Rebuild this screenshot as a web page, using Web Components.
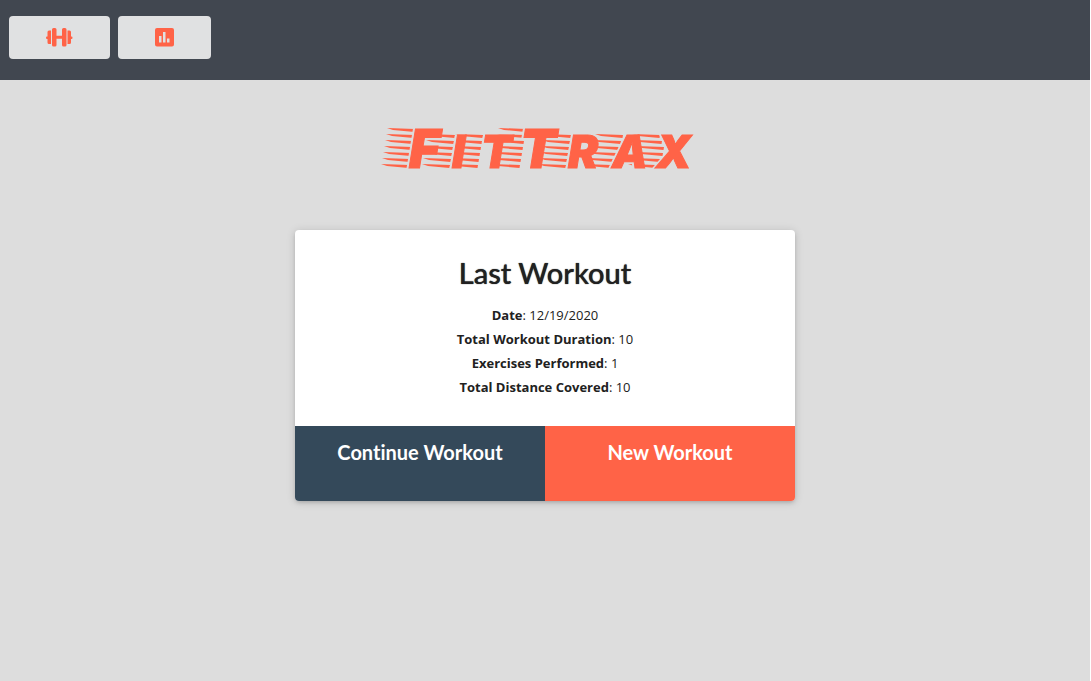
<!DOCTYPE html>
<html lang="en">
<head>
<meta charset="utf-8">
<meta name="viewport" content="width=device-width, initial-scale=1">
<title>FitTrax</title>
<style>
  html { background: #fff; }
  body { margin: 0; font-family: "Open Sans", "Noto Sans", sans-serif; color: #212121; }
</style>
</head>
<body>
<fit-app>
  <fit-nav slot="nav">
    <fit-nav-link href="#exercise" label="Workouts">
      <svg width="29" height="20" viewBox="0 0 29 20" fill="currentColor" aria-hidden="true">
        <path d="M2 8.500H2.500V4Q2.500 2.500 4 2.500H6V16H4Q2.500 16 2.500 14.500V11H2Q1 11 1 9.800Q1 8.500 2 8.500ZM8.500 0H10Q11.500 0 11.500 1.500V7.800H17V1.500Q17 0 18.500 0H20Q21.500 0 21.500 1.500V17Q21.500 18.500 20 18.500H18.500Q17 18.500 17 17V10.800H11.500V17Q11.500 18.500 10 18.500H8.500Q7 18.500 7 17V1.500Q7 0 8.500 0ZM22.500 2.500H24.500Q26 2.500 26 4V8.500H26.500Q27.500 8.500 27.500 9.800Q27.500 11 26.500 11H26V14.500Q26 16 24.500 16H22.500Z"/>
      </svg>
    </fit-nav-link>
    <fit-nav-link href="#stats" label="Statistics" compact>
      <svg width="21" height="20" viewBox="0 0 21 20" fill="currentColor" aria-hidden="true">
        <path fill-rule="evenodd" d="M3 0H18Q20 0 20 2V16.500Q20 18.500 18 18.500H3Q1 18.500 1 16.500V2Q1 0 3 0ZM5 8V14.500H7.500V8ZM9 4V14.500H11.500V4ZM13 10.500V14.500H15.500V10.500Z"/>
      </svg>
    </fit-nav-link>
  </fit-nav>
  <fit-logo></fit-logo>
  <workout-card heading="Last Workout">
    <workout-stat label="Date">12/19/2020</workout-stat>
    <workout-stat label="Total Workout Duration">10</workout-stat>
    <workout-stat label="Exercises Performed">1</workout-stat>
    <workout-stat label="Total Distance Covered">10</workout-stat>
    <workout-action slot="actions">Continue Workout</workout-action>
    <workout-action slot="actions" primary>New Workout</workout-action>
  </workout-card>
</fit-app>

<script>
class FitElement extends HTMLElement {
  constructor() {
    super();
    this.attachShadow({ mode: "open" }).innerHTML = this.view();
  }
}

customElements.define("fit-app", class extends FitElement {
  view() {
    return `<style>
      :host { display: flex; flex-direction: column; min-height: 100vh; margin-right: 1px; background: #ddd; }
      main { display: flex; flex-direction: column; align-items: center; gap: 56px; padding: 44px 16px; }
    </style>
    <slot name="nav"></slot>
    <main><slot></slot></main>`;
  }
});

customElements.define("fit-nav", class extends FitElement {
  view() {
    return `<style>
      :host { display: block; background: #414750; }
      nav { display: flex; gap: 8px; box-sizing: border-box; min-height: 80px; align-items: flex-start; padding: 16px 9px; }
    </style>
    <nav><slot></slot></nav>`;
  }
});

customElements.define("fit-nav-link", class extends FitElement {
  view() {
    return `<style>
      :host { display: block; color: #ff6347; }
      a { display: flex; box-sizing: border-box; height: 43px; align-items: center; justify-content: center; padding: 0 36px; border-radius: 4px; background: #e0e1e2; color: inherit; }
      ::slotted(svg) { display: block; }
    </style>
    <a href="${this.getAttribute("href")}" aria-label="${this.getAttribute("label")}"><slot></slot></a>`;
  }
});

/* Wordmark: heavy italic capitals with a fan of tapered speed lines behind each. */
customElements.define("fit-logo", class extends FitElement {
  view() {
    const rows = [12, 18, 24, 30, 36, 42, 48];
    const slant = [0, -1, -2, -3, -4, -5, -6];
    const fans = [
      { ends: slant.map(d => 40 + d), from: 0 },
      { ends: slant.map(d => 81 + d), from: 1 },
      { ends: slant.map(d => 109 + d), from: 1 },
      { ends: slant.map(d => 151 + d), from: 0 },
      { ends: slant.map(d => 197 + d), from: 1 },
      { ends: [0, 248, 246, 244, 242, 239, 236], from: 1 },
      { ends: [0, 285, 287, 289, 288, 285, 281], from: 1 }
    ];
    const line = (x, y) => `M${x - 28} ${y}L${x} ${y + 1}L${x - 0.5} ${y + 4}L${x - 22} ${y + 2}Z`;
    const d = fans.map(f => f.ends.map((x, i) => i < f.from ? "" : line(x, rows[i])).join("")).join("");
    return `<style>
      :host { display: block; color: #ff6347; }
      h1 { margin: 0; }
      svg { display: block; max-width: 100%; overflow: visible; }
      text { font: italic 900 53px Inter, "Open Sans", sans-serif; fill: currentColor; stroke: currentColor; stroke-width: 1px; filter: drop-shadow(-2px 0 0 #ddd); }
      .small { font-size: 45px; text-transform: uppercase; }
    </style>
    <h1><svg width="340" height="50" viewBox="0 8 340 50" role="img" aria-label="FitTrax">
      <path fill="currentColor" d="${d}"/>
      <text y="52"><tspan x="34">F</tspan><tspan class="small" x="77 106">it</tspan><tspan x="145">T</tspan><tspan class="small" x="193 237 281">rax</tspan></text>
    </svg></h1>`;
  }
});

customElements.define("workout-card", class extends FitElement {
  view() {
    return `<style>
      :host { display: block; width: 100%; max-width: 500px; border-radius: 4px; overflow: hidden; background: #fff; box-shadow: 0 2px 4px -1px rgba(0,0,0,.2), 0 1px 10px rgba(0,0,0,.14); }
      section { padding: 24px 16px 27px; text-align: center; }
      h2 { margin: 0 0 11px; font: 500 29px/38px "Lato Medium", Lato, sans-serif; text-shadow: 0 0 1px currentColor; }
      footer { display: grid; grid-template-columns: 1fr 1fr; }
    </style>
    <section><h2>${this.getAttribute("heading")}</h2><slot></slot></section>
    <footer><slot name="actions"></slot></footer>`;
  }
});

customElements.define("workout-stat", class extends FitElement {
  view() {
    return `<style>
      :host { display: block; font-size: 13px; line-height: 24px; }
      b { font-weight: 700; }
    </style>
    <b>${this.getAttribute("label")}</b>: <slot></slot>`;
  }
});

customElements.define("workout-action", class extends FitElement {
  view() {
    return `<style>
      :host { display: block; --fill: #34495a; }
      :host([primary]) { --fill: #ff6347; }
      button { display: block; width: 100%; margin: 0; padding: 14px 8px 37px; border: 0; background: var(--fill); color: #fff; font: 700 20px/24px Lato, sans-serif; font-variant-ligatures: none; cursor: pointer; }
    </style>
    <button type="button"><slot></slot></button>`;
  }
});
</script>
</body>
</html>
